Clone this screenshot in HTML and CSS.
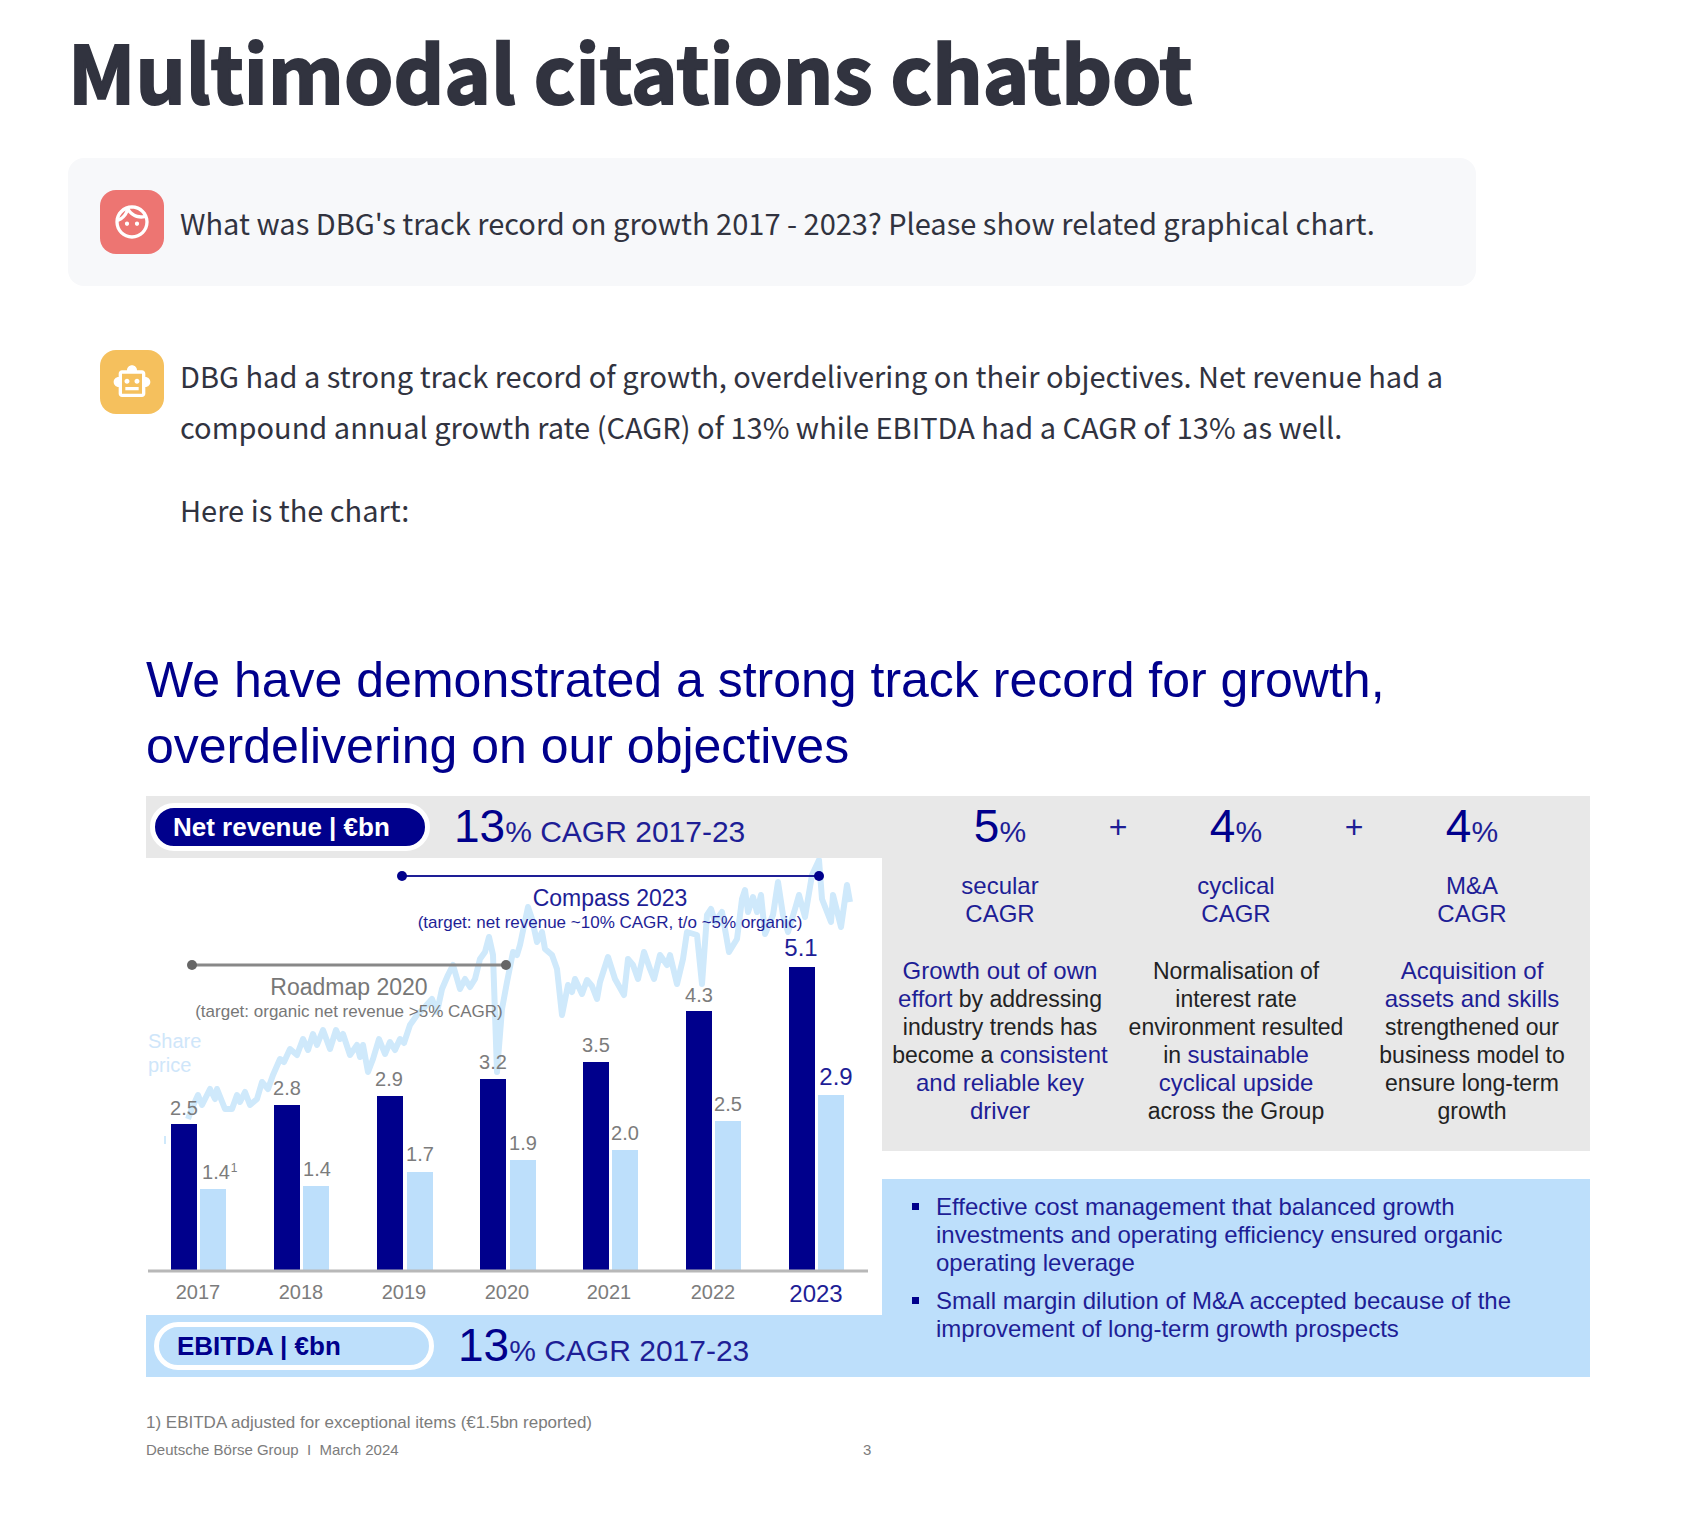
FILE: index.html
```html
<!DOCTYPE html>
<html lang="en">
<head>
<meta charset="utf-8">
<title>Multimodal citations chatbot</title>
<link rel="stylesheet" href="styles.css">
</head>
<body>
<main class="app">
  <h1 class="app-title">Multimodal citations chatbot</h1>

  <article class="message message-user">
    <div class="avatar avatar-user">
      <svg viewBox="0 0 24 24" aria-hidden="true"><path d="M10.25 13c0 .69-.56 1.25-1.25 1.25S7.75 13.69 7.75 13s.56-1.25 1.25-1.25 1.25.56 1.25 1.25zM15 11.75c-.69 0-1.25.56-1.25 1.25s.56 1.25 1.25 1.25 1.25-.56 1.25-1.25-.56-1.25-1.25-1.25zm7 .25c0 5.52-4.48 10-10 10S2 17.52 2 12 6.48 2 12 2s10 4.48 10 10zM10.66 4.12C12.06 6.44 14.6 8 17.5 8c.46 0 .91-.05 1.34-.12C17.44 5.56 14.9 4 12 4c-.46 0-.91.05-1.34.12zM4.42 9.47c1.71-.97 3.03-2.55 3.66-4.44C6.37 6 5.05 7.58 4.42 9.47zM20 12c0-.78-.12-1.53-.33-2.24-.7.15-1.42.24-2.17.24-3.13 0-5.92-1.44-7.76-3.69C8.69 8.87 6.6 10.88 4 11.86c.01.04 0 .09 0 .14 0 4.41 3.59 8 8 8s8-3.59 8-8z"/></svg>
    </div>
    <div class="message-body">
      <p>What was DBG's track record on growth 2017 - 2023? Please show related graphical chart.</p>
    </div>
  </article>

  <article class="message message-bot">
    <div class="avatar avatar-bot">
      <svg viewBox="0 0 24 24" aria-hidden="true"><path d="M20 9V7c0-1.100-.9-2-2-2h-3c0-1.660-1.340-3-3-3S9 3.340 9 5H6c-1.100 0-2 .9-2 2v2c-1.660 0-3 1.340-3 3s1.340 3 3 3v4c0 1.100.9 2 2 2h12c1.100 0 2-.9 2-2v-4c1.660 0 3-1.340 3-3s-1.340-3-3-3zm-2 10H6V7h12v12zm-9-6c-.83 0-1.500-.67-1.500-1.500S8.170 10 9 10s1.500.67 1.500 1.500S9.830 13 9 13zm7.500-1.500c0 .83-.67 1.500-1.500 1.500s-1.500-.67-1.500-1.500.67-1.500 1.500-1.500 1.500.67 1.500 1.500zM8 15h8v2H8v-2z"/></svg>
    </div>
    <div class="message-body">
      <p>DBG had a strong track record of growth, overdelivering on their objectives. Net revenue had a compound annual growth rate (CAGR) of 13% while EBITDA had a CAGR of 13% as well.</p>
      <p>Here is the chart:</p>
    </div>
  </article>

  <section class="slide">
    <h2 class="slide-title">We have demonstrated a strong track record for growth,<br>overdelivering on our objectives</h2>
    <div class="slide-grid">
      <div class="slide-left">
        <div class="band band-revenue">
          <span class="pill pill-revenue">Net revenue | €bn</span>
          <span class="cagr"><b>13</b>% CAGR 2017-23</span>
        </div>
        <svg class="chart" viewBox="146 856 736 457" role="img" aria-label="Net revenue and EBITDA by year with share price">
          <polyline class="share" points="188,1117 193,1104 198,1093 202,1103 210,1087 215,1097 217,1087 225,1107 232,1107 237,1093 240,1100 245,1090 250,1103 257,1097 262,1080 268,1087 273,1073 280,1057 284,1060 290,1047 297,1053 303,1037 308,1048 313,1032 317,1043 323,1028 330,1047 336,1028 340,1037 343,1032 350,1053 357,1043 360,1055 363,1043 368,1070 373,1057 379,1037 385,1052 390,1040 395,1048 400,1037 404,1041 410,1023 417,1013 423,1007 432,997 437,1010 442,987 448,973 453,963 460,987 465,977 470,985 475,977 480,957 485,950 489,935 493,953 497,1070 502,1007 507,980 513,950 517,953 520,943 528,905 532,917 537,940 542,930 545,947 552,953 557,967 562,1013 568,983 572,990 575,977 582,992 587,978 592,984 597,997 600,980 608,955 615,977 624,993 628,957 633,963 638,977 644,950 650,967 654,977 660,953 667,963 670,953 677,982 683,957 687,930 697,933 702,982 707,913 711,907 715,920 722,910 729,950 737,937 742,897 745,888 748,910 753,895 757,910 761,893 765,932 773,913 778,880 783,913 788,930 795,907 799,893 805,915 812,873 819,858 822,897 831,920 833,893 841,925 847,883 850,900"/>
          <path class="share-tick" d="M165 1134v8"/>
          <g class="bar-revenue">
            <rect x="171" y="1122" width="26" height="146"/>
            <rect x="274" y="1103" width="26" height="165"/>
            <rect x="377" y="1094" width="26" height="174"/>
            <rect x="480" y="1077" width="26" height="191"/>
            <rect x="583" y="1060" width="26" height="208"/>
            <rect x="686" y="1009" width="26" height="259"/>
            <rect x="789" y="965" width="26" height="303"/>
          </g>
          <g class="bar-ebitda">
            <rect x="200" y="1187" width="26" height="81"/>
            <rect x="303" y="1184" width="26" height="84"/>
            <rect x="407" y="1170" width="26" height="98"/>
            <rect x="510" y="1158" width="26" height="110"/>
            <rect x="612" y="1148" width="26" height="120"/>
            <rect x="715" y="1119" width="26" height="149"/>
            <rect x="818" y="1093" width="26" height="175"/>
          </g>
          <path class="axis" d="M148 1269h720"/>
          <g class="value">
            <text x="184" y="1113">2.5</text><text x="287" y="1093">2.8</text><text x="389" y="1084">2.9</text><text x="493" y="1067">3.2</text><text x="596" y="1050">3.5</text><text x="699" y="1000">4.3</text>
            <text x="216" y="1177">1.4</text><text class="note-ref" x="234" y="1170">1</text><text x="317" y="1174">1.4</text><text x="420" y="1159">1.7</text><text x="523" y="1148">1.9</text><text x="625" y="1138">2.0</text><text x="728" y="1109">2.5</text>
          </g>
          <g class="value">
            <text x="198" y="1297">2017</text><text x="301" y="1297">2018</text><text x="404" y="1297">2019</text><text x="507" y="1297">2020</text><text x="609" y="1297">2021</text><text x="713" y="1297">2022</text>
          </g>
          <g class="value-current">
            <text x="801" y="954">5.1</text><text x="836" y="1083">2.9</text><text x="816" y="1300">2023</text>
          </g>
          <g class="roadmap">
            <path d="M192 963h314"/><circle cx="192" cy="963" r="5"/><circle cx="506" cy="963" r="5"/>
            <text class="span-name" x="349" y="993">Roadmap 2020</text>
            <text class="span-target" x="349" y="1015">(target: organic net revenue &gt;5% CAGR)</text>
          </g>
          <g class="compass">
            <path d="M402 874h417"/><circle cx="402" cy="874" r="5"/><circle cx="819" cy="874" r="5"/>
            <text class="span-name" x="610" y="904">Compass 2023</text>
            <text class="span-target" x="610" y="926">(target: net revenue ~10% CAGR, t/o ~5% organic)</text>
          </g>
          <g class="share-label"><text x="148" y="1046">Share</text><text x="148" y="1070">price</text></g>
        </svg>
        <div class="band band-ebitda">
          <span class="pill pill-ebitda">EBITDA | €bn</span>
          <span class="cagr"><b>13</b>% CAGR 2017-23</span>
        </div>
      </div>

      <div class="slide-right">
        <div class="drivers">
          <div class="sum">
            <span class="cagr"><b>5</b>%</span><span class="plus">+</span><span class="cagr"><b>4</b>%</span><span class="plus">+</span><span class="cagr"><b>4</b>%</span>
          </div>
          <div class="driver-columns">
            <div class="driver">
              <h3>secular<br>CAGR</h3>
              <p><em>Growth out of own<br>effort</em> by addressing<br>industry trends has<br>become a <em>consistent<br>and reliable key<br>driver</em></p>
            </div>
            <div class="driver">
              <h3>cyclical<br>CAGR</h3>
              <p>Normalisation of<br>interest rate<br>environment resulted<br>in <em>sustainable<br>cyclical upside</em><br>across the Group</p>
            </div>
            <div class="driver">
              <h3>M&amp;A<br>CAGR</h3>
              <p><em>Acquisition of<br>assets and skills</em><br>strengthened our<br>business model to<br>ensure long-term<br>growth</p>
            </div>
          </div>
        </div>
        <ul class="points">
          <li>Effective cost management that balanced growth<br>investments and operating efficiency ensured organic<br>operating leverage</li>
          <li>Small margin dilution of M&amp;A accepted because of the<br>improvement of long-term growth prospects</li>
        </ul>
      </div>
    </div>
    <footer class="slide-footer">
      <p class="footnote">1) EBITDA adjusted for exceptional items (€1.5bn reported)</p>
      <p class="source"><span>Deutsche Börse Group &nbsp;I&nbsp; March 2024</span><span>3</span></p>
    </footer>
  </section>
</main>
</body>
</html>
```
FILE: styles.css
```css
:root {
  --ink: #31333f;
  --navy: #00008c;
  --navy-soft: #1e1e96;
  --sky: #bddffb;
  --grey: #e8e8e8;
  --muted: #7c7c7c;
}

* {
  box-sizing: border-box;
}

body {
  margin: 0;
  background: #fff;
  color: var(--ink);
  font-family: "Noto Sans CJK JP", "Noto Sans CJK SC", sans-serif;
}

h1, h2, h3, p, ul {
  margin: 0;
  padding: 0;
}

.app {
  padding: 18px 110px 60px 68px;
}

.app-title {
  font-size: 79px;
  line-height: 104px;
  font-weight: 700;
  margin-bottom: 36px;
  -webkit-text-stroke: 2px var(--ink);
}

.message {
  display: flex;
  gap: 16px;
  padding: 32px;
  margin-right: 114px;
  border-radius: 16px;
}

.message-user {
  align-items: center;
  background: #f7f8fa;
  margin-bottom: 32px;
}

.avatar {
  display: flex;
  flex: none;
  align-items: center;
  justify-content: center;
  width: 64px;
  height: 64px;
  border-radius: 16px;
}

.avatar svg {
  width: 40px;
  height: 40px;
  fill: #fff;
}

.avatar-user {
  background: #ed7572;
}

.avatar-bot {
  background: #f5c05d;
}

.message-body {
  display: flex;
  flex-direction: column;
  gap: 32px;
  font-size: 29px;
  line-height: 51px;
}

.slide {
  margin: 80px 0 0 78px;
  color: var(--navy);
  font-family: "Liberation Sans", Arial, sans-serif;
  white-space: nowrap;
}

.slide-title {
  font-size: 50px;
  line-height: 66px;
  font-weight: 400;
  margin-bottom: 17px;
}

.slide-grid {
  display: grid;
  grid-template-columns: 736fr 708fr;
}

.slide-left,
.slide-right {
  display: flex;
  flex-direction: column;
}

.band {
  display: flex;
  align-items: center;
  gap: 24px;
  min-height: 60px;
  padding-left: 4px;
}

.band-revenue {
  background: var(--grey);
}

.band-ebitda {
  flex-grow: 1;
  padding-left: 8px;
  background: var(--sky);
}

.pill {
  width: 280px;
  height: 48px;
  padding-left: 18px;
  border: 5px solid #fff;
  border-radius: 24px;
  font-size: 26px;
  line-height: 38px;
  font-weight: 700;
}

.pill-revenue {
  background: var(--navy);
  color: #fff;
}

.cagr {
  padding-top: 4px;
  color: var(--navy-soft);
  font-size: 30px;
  line-height: 52px;
}

.cagr b {
  color: var(--navy);
  font-size: 46px;
  font-weight: 400;
}

.chart {
  display: block;
  width: 100%;
  background: #fff;
}

.chart text {
  text-anchor: middle;
}

.share,
.share-tick {
  fill: none;
  stroke: #cfe9fb;
  stroke-width: 6;
  stroke-linejoin: round;
}

.share-tick {
  stroke-width: 2;
}

.bar-revenue {
  fill: var(--navy);
}

.bar-ebitda {
  fill: var(--sky);
}

.axis {
  stroke: #b8b8b8;
  stroke-width: 3;
}

.value {
  fill: var(--muted);
  font-size: 20px;
}

.value .note-ref {
  font-size: 12px;
}

.value-current {
  fill: var(--navy-soft);
  font-size: 24px;
}

.span-name {
  font-size: 23px;
}

.span-target {
  font-size: 17px;
}

.roadmap {
  fill: #777;
}

.roadmap path {
  stroke: #888;
  stroke-width: 3;
}

.roadmap circle {
  fill: #666;
}

.compass {
  fill: var(--navy-soft);
}

.compass path {
  stroke: var(--navy-soft);
  stroke-width: 2;
}

.compass circle {
  fill: var(--navy);
}

.chart .share-label text {
  fill: #cfe6fa;
  font-size: 20px;
  text-anchor: start;
}

.drivers {
  min-height: 355px;
  background: var(--grey);
}

.sum {
  display: grid;
  grid-template-columns: repeat(5, 1fr);
  align-items: center;
  height: 60px;
  padding: 0 59px;
  text-align: center;
}

.plus {
  font-size: 32px;
  line-height: 52px;
  color: var(--navy-soft);
}

.driver-columns {
  display: grid;
  grid-template-columns: repeat(3, 1fr);
  padding-top: 16px;
  text-align: center;
}

.driver h3 {
  color: var(--navy-soft);
  font-size: 24px;
  line-height: 28px;
  font-weight: 400;
  margin-bottom: 29px;
}

.driver p {
  color: #222;
  font-size: 23px;
  line-height: 28px;
}

.driver em {
  color: var(--navy-soft);
  font-size: 24px;
  font-style: normal;
}

.points {
  flex: 1;
  display: flex;
  flex-direction: column;
  gap: 10px;
  margin-top: 28px;
  padding: 14px 0 0 30px;
  background: var(--sky);
  color: var(--navy-soft);
  font-size: 24px;
  line-height: 28px;
  list-style: none;
}

.points li {
  display: flex;
  gap: 17px;
}

.points li::before {
  content: "";
  flex: none;
  width: 7px;
  height: 7px;
  margin-top: 10px;
  background: var(--navy);
}

.slide-footer {
  padding-top: 32px;
  color: var(--muted);
  line-height: 27px;
}

.footnote {
  font-size: 17px;
}

.source {
  display: grid;
  grid-template-columns: 717fr 727fr;
  font-size: 15px;
}
```
